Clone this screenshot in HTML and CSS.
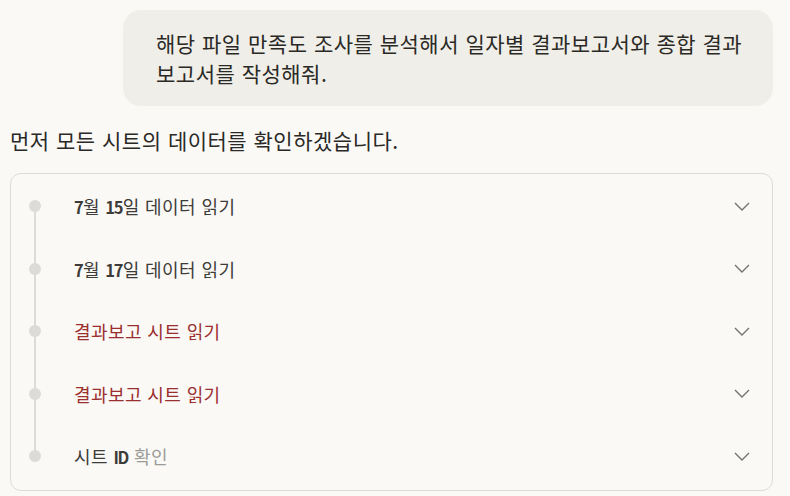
FILE: index.html
```html
<!DOCTYPE html>
<html lang="ko">
<head>
<meta charset="utf-8">
<link rel="stylesheet" href="styles.css">
</head>
<body>
<div class="page">
  <div class="user-row">
    <div class="bubble">해당 파일 만족도 조사를 분석해서 일자별 결과보고서와 종합 결과<br>보고서를 작성해줘.</div>
  </div>
  <p class="reply">먼저 모든 시트의 데이터를 확인하겠습니다.</p>
  <div class="steps">
    <div class="step">
      <span class="dot"></span>
      <span class="label"><span class="num">7</span>월 <span class="num">15</span>일 데이터 읽기</span>
      <svg class="chev" width="16" height="9" viewBox="0 0 16 9"><path d="M1 1 L8 8 L15 1" fill="none" stroke="#747370" stroke-width="1.4"/></svg>
    </div>
    <div class="step">
      <span class="dot"></span>
      <span class="label"><span class="num">7</span>월 <span class="num">17</span>일 데이터 읽기</span>
      <svg class="chev" width="16" height="9" viewBox="0 0 16 9"><path d="M1 1 L8 8 L15 1" fill="none" stroke="#747370" stroke-width="1.4"/></svg>
    </div>
    <div class="step">
      <span class="dot"></span>
      <span class="label error">결과보고 시트 읽기</span>
      <svg class="chev" width="16" height="9" viewBox="0 0 16 9"><path d="M1 1 L8 8 L15 1" fill="none" stroke="#747370" stroke-width="1.4"/></svg>
    </div>
    <div class="step">
      <span class="dot"></span>
      <span class="label error">결과보고 시트 읽기</span>
      <svg class="chev" width="16" height="9" viewBox="0 0 16 9"><path d="M1 1 L8 8 L15 1" fill="none" stroke="#747370" stroke-width="1.4"/></svg>
    </div>
    <div class="step">
      <span class="dot"></span>
      <span class="label">시트 <span class="num">ID</span> <span class="pending">확인</span></span>
      <svg class="chev" width="16" height="9" viewBox="0 0 16 9"><path d="M1 1 L8 8 L15 1" fill="none" stroke="#747370" stroke-width="1.4"/></svg>
    </div>
  </div>
</div>
</body>
</html>
```
FILE: styles.css
```css
html, body {
  margin: 0;
  padding: 0;
  background: #faf9f6;
}
body {
  font-family: "Noto Sans CJK KR", "Noto Sans", sans-serif;
  color: #2a2926;
}
.page {
  width: 790px;
  height: 496px;
  overflow: hidden;
  padding: 10px 17px 0 10px;
  box-sizing: border-box;
}
.user-row {
  display: flex;
  justify-content: flex-end;
}
.bubble {
  width: 650px;
  box-sizing: border-box;
  background: #f0eee8;
  border-radius: 18px;
  padding: 18px 10px 18px 33px;
  font-size: 21px;
  letter-spacing: 0.5px;
  line-height: 30px;
  color: #2a2926;
}
.reply {
  margin: 19px 0 0 0;
  font-size: 21px;
  letter-spacing: 0.5px;
  line-height: 30px;
  color: #2a2926;
}
.steps {
  margin-top: 18px;
  border: 1px solid #dedcd7;
  border-radius: 11px;
  padding: 1px 0 2px;
  background: #faf9f6;
}
.step {
  position: relative;
  height: 62.5px;
  display: flex;
  align-items: center;
  padding: 0 22px 0 18px;
}
.step::before {
  content: "";
  position: absolute;
  left: 23px;
  width: 2px;
  top: 0;
  bottom: 0;
  background: #dcdbd8;
}
.step:first-child::before { top: 50%; }
.step:last-child::before { bottom: 50%; }
.dot {
  position: relative;
  width: 12px;
  height: 12px;
  border-radius: 50%;
  background: #dcdbd8;
  flex: none;
}
.label {
  margin-left: 33px;
  flex: 1;
  font-size: 18px;
  letter-spacing: 0.4px;
  color: #3d3c39;
}
.label .num {
  font-weight: 600;
  font-size: 16.5px;
  letter-spacing: -1.3px;
  margin-right: 0.5px;
}
.error { color: #9a2f2f; }
.pending { color: #9c9b98; }
.chev { flex: none; }
```
